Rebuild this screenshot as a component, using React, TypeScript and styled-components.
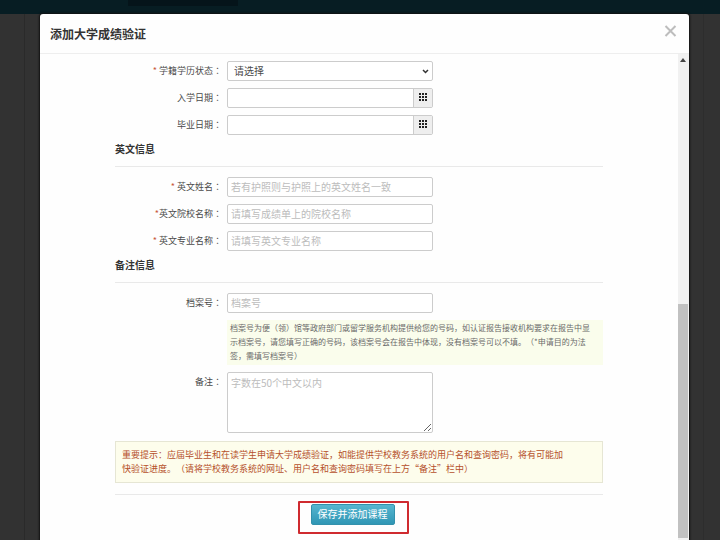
import React, { useId } from "react";
import styled, { createGlobalStyle } from "styled-components";

const GlobalStyle = createGlobalStyle`
  *, *::before, *::after { box-sizing: border-box; }
  body {
    margin: 0;
    background: #323232;
    color: #4a4a4a;
    font-family: "Noto Sans CJK SC", "Open Sans", sans-serif;
    font-size: 10px;
    line-height: 14px;
    text-spacing-trim: space-all;
  }
  input, select, textarea, button { font: inherit; color: inherit; margin: 0; }
`;

const Page = styled.div`
  display: flex;
  flex-direction: column;
  min-height: 100vh;
`;

const TopBar = styled.header`
  height: 14px;
  padding-left: 128px;
  background: #071d23;
`;

const ActiveTab = styled.div`
  width: 110px;
  height: 6px;
  background: #05141a;
`;

const Backdrop = styled.div`
  flex: 1;
  display: flex;
  padding: 0 16px 0 24px;
`;

const Column = styled.div`
  flex: 1;
  display: flex;
  padding: 0 14px 0 15px;
  border-left: 1px solid #2a2a2a;
  border-right: 1px solid #2d2d2d;
`;

const Dialog = styled.section`
  flex: 1;
  display: flex;
  flex-direction: column;
  background: #fefefe;
  border-radius: 3px 3px 0 0;
  box-shadow: 0 0 2px 1px #111;
`;

const DialogHeader = styled.header`
  display: flex;
  justify-content: space-between;
  align-items: center;
  height: 40px;
  padding: 0 12px 0 10px;
  border-bottom: 1px solid #eee;
`;

const Title = styled.h1`
  margin: 0;
  font-size: 12px;
  line-height: 18px;
  font-weight: 700;
  color: #333;
`;

const CloseButton = styled.button`
  display: flex;
  padding: 0 0 6px;
  border: 0;
  background: none;
  color: #bdbdbd;
`;

const DialogBody = styled.div`
  flex: 1;
  display: flex;
`;

const Form = styled.form`
  flex: 1;
  display: flex;
  flex-direction: column;
  padding: 7px 75px;
`;

const Fields = styled.div`
  display: flex;
  flex-direction: column;
  gap: 7px;
`;

const Row = styled.div`
  display: grid;
  grid-template-columns: 107px minmax(0, 1fr);
  column-gap: 5px;
`;

const Label = styled.label`
  font-size: 9px;
  line-height: 20px;
  text-align: right;
  white-space: pre;
`;

const Colon = styled.span`
  font-family: "Noto Sans CJK TC", sans-serif;
`;

const Star = styled.span`
  color: #c8583c;
`;

const Control = styled.div`
  display: flex;
  max-width: 206px;
  height: 20px;
  border: 1px solid #ccc;
  border-radius: 2px;
  background: #fff;
  overflow: hidden;
`;

const TextInput = styled.input`
  flex: 1;
  min-width: 0;
  padding: 0 3px;
  border: 0;
  background: none;
  outline: none;
  &::placeholder { color: #bcbcbc; opacity: 1; }
`;

const SelectInput = styled.select`
  grid-area: 1 / 1;
  width: 100%;
  padding: 0 6px;
  border: 0;
  background: none;
  appearance: none;
  outline: none;
`;

const SelectBox = styled(Control)`
  display: grid;
  align-items: center;
`;

const Chevron = styled.svg`
  grid-area: 1 / 1;
  justify-self: end;
  margin-right: 3px;
  pointer-events: none;
`;

const PickerButton = styled.button`
  display: flex;
  align-items: center;
  justify-content: center;
  width: 19px;
  padding: 0 0 2px;
  border: 0;
  border-left: 1px solid #ccc;
  background: #eee;
`;

const Area = styled.textarea`
  display: block;
  width: 100%;
  max-width: 206px;
  height: 61px;
  padding: 3px;
  border: 1px solid #ccc;
  border-radius: 2px;
  background: #fff;
  outline: none;
  resize: both;
  &::placeholder { color: #bcbcbc; opacity: 1; }
`;

const SectionTitle = styled.h2`
  margin: 0 0 10px;
  padding: 7px 0 10px;
  border-bottom: 1px solid #e9e9e9;
  font-size: 10px;
  line-height: 14px;
  font-weight: 700;
  color: #333;
`;

const Hint = styled.p`
  grid-column: 2;
  margin: 0;
  padding: 1px 3px 2px;
  background: #fafdec;
  color: #6a6a6a;
  font-size: 8px;
  line-height: 14px;
`;

const Warning = styled.p`
  margin: 8px 0 11px;
  padding: 6px;
  border: 1px solid #e6e6d4;
  background: #fdfdec;
  color: #b5502b;
  font-size: 9px;
  line-height: 14px;
`;

const Actions = styled.div`
  display: flex;
  justify-content: center;
  padding: 6px 12px 0 0;
  border-top: 1px solid #e9e9e9;
`;

const Highlight = styled.div`
  padding: 1px 12px 7px 11px;
  border: 2px solid #cf2a2f;
  border-radius: 1px;
`;

const SaveButton = styled.button`
  display: block;
  width: 84px;
  height: 21px;
  padding: 0 0 2px;
  border: 1px solid #3391ac;
  border-radius: 2px;
  background: linear-gradient(#57b6d0, #2f96b4);
  color: #fff;
`;

const ScrollTrack = styled.div`
  display: flex;
  flex-direction: column;
  width: 11px;
  padding: 4px 1px 3px 0;
  background: #f1f1f1;
`;

const ScrollGap = styled.div`
  flex: 241;
`;

const ScrollThumb = styled.div`
  flex: 234;
  background: #c1c1c1;
`;

const ScrollArrow = styled.svg`
  align-self: center;
`;

type LabelProps = { id: string; text: string; star?: string };

function FieldLabel({ id, text, star = "" }: LabelProps) {
  return (
    <Label htmlFor={id}>
      <Star>{star}</Star>
      {text}
      <Colon>：</Colon>
    </Label>
  );
}

type FieldProps = { label: string; star?: string; placeholder?: string };

function TextField({ label, star, placeholder }: FieldProps) {
  const id = useId();
  return (
    <Row>
      <FieldLabel id={id} text={label} star={star} />
      <Control>
        <TextInput id={id} type="text" placeholder={placeholder} />
      </Control>
    </Row>
  );
}

const cells = [0, 3, 6];

function DateField({ label }: FieldProps) {
  const id = useId();
  return (
    <Row>
      <FieldLabel id={id} text={label} />
      <Control>
        <TextInput id={id} type="text" />
        <PickerButton type="button" aria-label={`选择${label}`}>
          <svg width="8" height="8" viewBox="0 0 8 8" fill="#222">
            {cells.map((y) =>
              cells.map((x) => <rect key={`${x}-${y}`} x={x} y={y} width="2" height="2" />)
            )}
          </svg>
        </PickerButton>
      </Control>
    </Row>
  );
}

function StatusField() {
  const id = useId();
  return (
    <Row>
      <FieldLabel id={id} text="学籍学历状态" star="* " />
      <SelectBox>
        <SelectInput id={id}>
          <option>请选择</option>
        </SelectInput>
        <Chevron width="7" height="5" viewBox="0 0 7 5" fill="none" stroke="#333" strokeWidth="1.5">
          <path d="M1 1l2.5 2.5L6 1" />
        </Chevron>
      </SelectBox>
    </Row>
  );
}

export default function App() {
  const remarkId = useId();
  return (
    <>
      <GlobalStyle />
      <Page>
        <TopBar>
          <ActiveTab />
        </TopBar>
        <Backdrop>
          <Column>
            <Dialog role="dialog" aria-labelledby="dialog-title">
              <DialogHeader>
                <Title id="dialog-title">添加大学成绩验证</Title>
                <CloseButton type="button" aria-label="关闭">
                  <svg width="13" height="12" viewBox="0 0 13 12" fill="none" stroke="currentColor" strokeWidth="2">
                    <path d="M1.5 1l10 10M11.5 1l-10 10" />
                  </svg>
                </CloseButton>
              </DialogHeader>
              <DialogBody>
                <Form>
                  <Fields>
                    <StatusField />
                    <DateField label="入学日期" />
                    <DateField label="毕业日期" />
                  </Fields>
                  <SectionTitle>英文信息</SectionTitle>
                  <Fields>
                    <TextField label="英文姓名" star="* " placeholder="若有护照则与护照上的英文姓名一致" />
                    <TextField label="英文院校名称" star="*" placeholder="请填写成绩单上的院校名称" />
                    <TextField label="英文专业名称" star="* " placeholder="请填写英文专业名称" />
                  </Fields>
                  <SectionTitle>备注信息</SectionTitle>
                  <Fields>
                    <TextField label="档案号" placeholder="档案号" />
                    <Row>
                      <Hint>
                        档案号为便（领）馆等政府部门或留学服务机构提供给您的号码，如认证报告接收机构要求在报告中显
                        <br />
                        示档案号，请您填写正确的号码，该档案号会在报告中体现，没有档案号可以不填。（*申请目的为法
                        <br />
                        签，需填写档案号）
                      </Hint>
                    </Row>
                    <Row>
                      <FieldLabel id={remarkId} text="备注" />
                      <Area id={remarkId} placeholder="字数在50个中文以内" />
                    </Row>
                  </Fields>
                  <Warning>
                    重要提示：应届毕业生和在读学生申请大学成绩验证，如能提供学校教务系统的用户名和查询密码，将有可能加
                    <br />
                    快验证进度。（请将学校教务系统的网址、用户名和查询密码填写在上方“备注”栏中）
                  </Warning>
                  <Actions>
                    <Highlight>
                      <SaveButton type="button">保存并添加课程</SaveButton>
                    </Highlight>
                  </Actions>
                </Form>
                <ScrollTrack aria-hidden="true">
                  <ScrollArrow width="6" height="4" viewBox="0 0 6 4" fill="#444">
                    <path d="M3 0L6 4H0z" />
                  </ScrollArrow>
                  <ScrollGap />
                  <ScrollThumb />
                </ScrollTrack>
              </DialogBody>
            </Dialog>
          </Column>
        </Backdrop>
      </Page>
    </>
  );
}
